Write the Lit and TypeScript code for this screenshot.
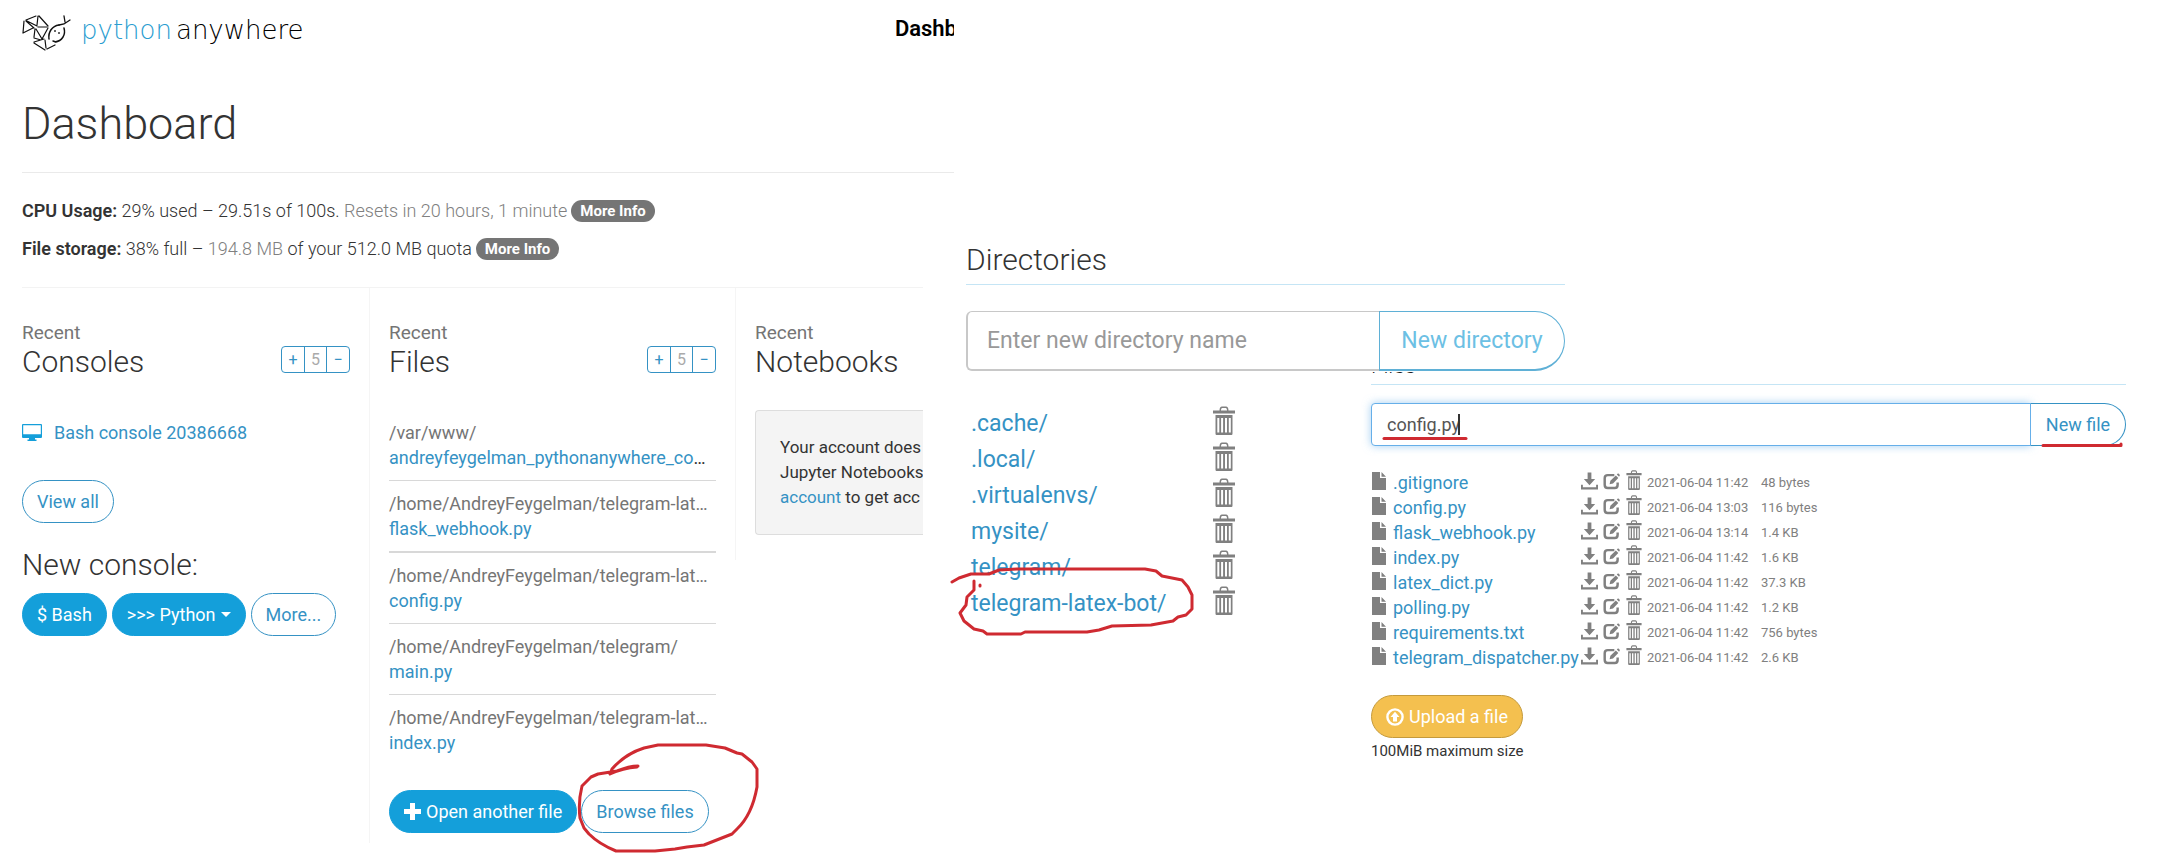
import { LitElement, html, css } from "lit";
import { customElement } from "lit/decorators.js";

const trash = html`<svg viewBox="0 0 22 29" aria-hidden="true"><path fill-rule="evenodd" d="M0 4.500h6.500c0-2.500 1-4 2.500-4h4c1.500 0 2.500 1.500 2.500 4H22v3H0zM8 4.500h6c0-1.500-.5-2.500-1.200-2.500H9.200C8.500 2 8 3 8 4.500zM2.500 9h17v18.500c0 1-.5 1.500-1.500 1.500H4c-1 0-1.500-.5-1.500-1.500zM4.300 12v14.500h2V12zM8.100 12v14.500h2V12zM12 12v14.500h2V12zM15.800 12v14.500h2V12z"/></svg>`;
const fileIcon = html`<svg class="doc" viewBox="0 0 14 18" aria-hidden="true"><path d="M0 0h8v6h6v12H0zM9.500 0L14 4.700H9.500z"/></svg>`;
const download = html`<svg viewBox="0 0 18 18" aria-hidden="true"><path d="M7 0h4v7h4l-6 6.500L3 7h4zM0 13h2v2.500h14V13h2v5H0z"/></svg>`;
const edit = html`<svg viewBox="0 0 18 18" aria-hidden="true"><path fill="none" stroke="currentColor" stroke-width="2.600" d="M12 2.800H5Q1.800 2.800 1.800 6v7Q1.800 16.500 5 16.500h7.500q3 0 3-3.500v-2.500"/><path d="M7 12.500l.8-3.700 5.800-5.600 2.600 2.600-5.600 5.800zM14.600 2.200L16 .8 18 2.600 17 4.500z"/></svg>`;

const snake = html`<svg class="snake" viewBox="0 0 49 36" aria-hidden="true"><g fill="none" stroke="#111" stroke-width="1.200" stroke-linecap="round"><path d="M4 5L14 1M2 6L1 18M4 6L12 13M5 6L15 11M1 18L11 13M16 1L15 10M17 1L26 11M16 12L25 12M13 14L12 22M14 14L20 24M26 13L20 24M12 23L19 25M12 27L22 24M12 28L23 35M23 25L24 33M25 34L33 30"/><path d="M37 10C30 11 26 17 27 24M42 13C44 20 40 26 33 27M31 26l3 1" stroke-width="1.500"/><path d="M37 10l5-1 6-4M42 1l1 6" stroke-width="1.300"/></g><circle cx="33" cy="16" r="1"/><circle cx="37" cy="18" r="1"/></svg>`;

const recentFiles = [
  ["/var/www/", "andreyfeygelman_pythonanywhere_co", false, true],
  ["/home/AndreyFeygelman/telegram-lat", "flask_webhook.py", true, false],
  ["/home/AndreyFeygelman/telegram-lat", "config.py", true, false],
  ["/home/AndreyFeygelman/telegram/", "main.py", false, false],
  ["/home/AndreyFeygelman/telegram-lat", "index.py", true, false],
] as const;

const directories = [".cache/", ".local/", ".virtualenvs/", "mysite/", "telegram/", "telegram-latex-bot/"];

const files = [
  [".gitignore", "2021-06-04 11:42", "48 bytes"],
  ["config.py", "2021-06-04 13:03", "116 bytes"],
  ["flask_webhook.py", "2021-06-04 13:14", "1.4 KB"],
  ["index.py", "2021-06-04 11:42", "1.6 KB"],
  ["latex_dict.py", "2021-06-04 11:42", "37.3 KB"],
  ["polling.py", "2021-06-04 11:42", "1.2 KB"],
  ["requirements.txt", "2021-06-04 11:42", "756 bytes"],
  ["telegram_dispatcher.py", "2021-06-04 11:42", "2.6 KB"],
];

const shared = css`
  :host { display: block; font: 18px/25px Roboto, sans-serif; color: #333; }
  * { box-sizing: border-box; }
  h1, h2, p, ul { margin: 0; padding: 0; }
  h1, h2 { font-weight: 300; }
  ul { list-style: none; }
  a { color: #3592c4; text-decoration: none; }
  button, input { font: inherit; margin: 0; }
  svg { display: block; fill: currentColor; overflow: visible; }
  .btn { height: 43px; padding: 0 14px; border: 1px solid #3592c4; border-radius: 22px; background: #fff; color: #3592c4; white-space: nowrap; display: inline-flex; align-items: center; gap: 5px; }
  .solid { background: #149fda; border-color: #149fda; color: #fff; }
  .ink { position: absolute; fill: none; stroke: #cf2a31; stroke-width: 3; stroke-linejoin: round; stroke-linecap: round; pointer-events: none; }
`;

@customElement("dashboard-panel")
class DashboardPanel extends LitElement {
  static styles = [shared, css`
    :host { overflow: hidden; padding: 0 0 28px 22px; }
    .top { display: flex; justify-content: space-between; align-items: center; height: 56px; padding-top: 10px; }
    .brand { display: flex; align-items: center; gap: 10px; }
    .snake { width: 49px; height: 36px; }
    .name { font: 200 26px/30px "DejaVu Sans", sans-serif; color: #000; white-space: nowrap; display: flex; gap: 4px; margin-top: -6px; }
    .name b { font-weight: 200; color: #2a9dd0; }
    .here { font-size: 22px; font-weight: 600; color: #000; margin: 0 -3px 10px 0; }
    h1 { font-size: 45px; line-height: 50px; padding: 43px 0 23px; border-bottom: 1px solid #eaeaea; }
    .stats { padding: 25px 0 26px; display: grid; gap: 13px; font-weight: 300; }
    .stats p { display: flex; align-items: center; gap: 4px; white-space: pre; }
    .stats b { font-weight: 600; }
    .dim { color: #808080; }
    .pill { border: 0; border-radius: 12px; height: 22px; padding: 0 9px; background: #757575; color: #fff; font-size: 15px; line-height: 22px; font-weight: 700; }
    .cols { display: grid; grid-template-columns: 347fr 366fr 188fr; align-items: start; margin-right: 31px; border-top: 1px solid #f3f3f3; }
    .col { padding: 32px 19px 10px 0; min-width: 0; }
    .col + .col { padding-left: 19px; border-left: 1px solid #f5f5f5; }
    .col:nth-child(3) { padding-right: 0; padding-bottom: 25px; overflow: hidden; }
    .head { display: flex; justify-content: space-between; align-items: flex-end; height: 58px; margin-bottom: 42px; }
    .recent { color: #757575; font-size: 19px; }
    h2 { font-size: 30px; line-height: 33px; }
    .count { display: flex; height: 27px; margin-bottom: 5px; border: 1px solid #3592c4; border-radius: 4px; align-items: stretch; font-size: 16px; color: #aaa; text-align: center; line-height: 25px; }
    .count span { width: 21px; }
    .count button { width: 23px; border: 0; padding: 0; background: none; color: #3592c4; }
    .count button:first-child { border-right: 1px solid #3592c4; }
    .count button:last-child { border-left: 1px solid #3592c4; }
    .console { display: flex; align-items: center; gap: 12px; margin-bottom: 35px; }
    .screen { width: 20px; height: 17px; color: #149fda; }
    .new { padding: 25px 0 12px; }
    .row { display: flex; gap: 5px; }
    .files li { padding-bottom: 10px; white-space: nowrap; }
    .files li + li { padding-top: 10px; border-top: 1px solid #d8d8d8; }
    .files li:nth-child(3) { border-top-width: 2px; }
    .files p { color: #757575; }
    .actions { display: flex; gap: 4px; padding-top: 25px; position: relative; }
    .actions .ink { left: 190px; top: -21px; width: 180px; height: 110px; }
    .plus { width: 17px; height: 17px; }
    .well { padding: 24px; height: 125px; font-size: 17px; background: #f4f4f4; border: 1px solid #ddd; border-right: 0; border-radius: 4px 0 0 4px; white-space: nowrap; margin-top: -10px; }
  `];

  counter(label: string) {
    return html`<div class="count"><button aria-label="More ${label}">+</button><span>5</span><button aria-label="Fewer ${label}">−</button></div>`;
  }

  render() {
    return html`
      <header class="top">
        <div class="brand">${snake}<span class="name"><b>python</b><span>anywhere</span></span></div>
        <span class="here">Dashb</span>
      </header>
      <h1>Dashboard</h1>
      <div class="stats">
        <p><span><b>CPU Usage:</b> 29% used – 29.51s of 100s. <span class="dim">Resets in 20 hours, 1 minute</span></span><button class="pill">More Info</button></p>
        <p><span><b>File storage:</b> 38% full – <span class="dim">194.8 MB</span> of your 512.0 MB quota</span><button class="pill">More Info</button></p>
      </div>
      <div class="cols">
        <section class="col">
          <div class="head"><div><p class="recent">Recent</p><h2>Consoles</h2></div>${this.counter("consoles")}</div>
          <div class="console"><svg class="screen" viewBox="0 0 20 17" aria-hidden="true"><path fill-rule="evenodd" d="M1 0h18q1 0 1 1v12q0 1-1 1h-6v1.500h1.500V17h-9v-1.500H7V14H1q-1 0-1-1V1q0-1 1-1zM1.200 1.200v9h17.600v-9z"/></svg><a href="#">Bash console 20386668</a></div>
          <button class="btn">View all</button>
          <h2 class="new">New console:</h2>
          <div class="row"><button class="btn solid">$ Bash</button><button class="btn solid">&gt;&gt;&gt; Python<svg width="10" height="5" viewBox="0 0 10 5" aria-hidden="true"><path d="M0 0h10L5 5z"/></svg></button><button class="btn">More...</button></div>
        </section>
        <section class="col">
          <div class="head"><div><p class="recent">Recent</p><h2>Files</h2></div>${this.counter("files")}</div>
          <ul class="files">${recentFiles.map(([dir, name, dirCut, nameCut]) => html`<li><p>${dir}${dirCut ? "…" : ""}</p><a href="#">${name}</a>${nameCut ? "…" : ""}</li>`)}</ul>
          <div class="actions">
            <button class="btn solid"><svg class="plus" viewBox="0 0 17 17" aria-hidden="true"><path d="M6 0h5v6h6v5h-6v6H6v-6H0V6h6z"/></svg>Open another file</button>
            <button class="btn">Browse files</button>
            <svg class="ink" viewBox="0 0 180 110" aria-hidden="true"><path d="M58 23Q44 24 31 30L33 25Q46 10 65 4L79 1H127L146 4L158 9L163 10L173 18L178 25V43Q173 71 158 85L153 90L125 101L108 103L96 105L76 107H37Q20 100 10 90L5 84L1 74Q-1 58 3 42L12 33L19 30L38 27Q50 22 59 22"/></svg>
          </div>
        </section>
        <section class="col">
          <div class="head"><div><p class="recent">Recent</p><h2>Notebooks</h2></div></div>
          <div class="well">Your account does<br>Jupyter Notebooks<br><a href="#">account</a> to get acc</div>
        </section>
      </div>`;
  }
}

@customElement("directories-panel")
class DirectoriesPanel extends LitElement {
  static styles = [shared, css`
    h2 { font-size: 30px; line-height: 36px; padding: 0 0 6px; border-bottom: 1px solid #c5e5f5; margin-bottom: 26px; }
    .add { display: flex; height: 60px; font-size: 23px; background: #fff; }
    input { flex: 1; min-width: 0; padding: 0 19px; border: 2px solid #c8c8c8; border-top-width: 1px; border-right: 0; border-radius: 6px 0 0 6px; background: #fff; }
    input::placeholder { color: #999; opacity: 1; }
    .add button { width: 186px; padding: 0; border: 1px solid #5fb0d6; border-bottom-width: 2px; border-radius: 0 30px 30px 0; background: #fff; color: #6cc0e4; }
    ul { position: relative; padding: 35px 0 0 5px; font-size: 23px; line-height: 36px; }
    li { display: grid; grid-template-columns: 242px 22px; align-items: start; }
    .bin { border: 0; padding: 0; background: none; color: #808080; height: 36px; display: flex; align-items: flex-start; }
    .bin svg { width: 22px; height: 29px; }
    .ink { left: -15px; top: 196px; width: 242px; height: 66px; }
  `];

  render() {
    return html`
      <h2>Directories</h2>
      <form class="add"><input aria-label="New directory name" placeholder="Enter new directory name"><button type="button">New directory</button></form>
      <ul>${directories.map((d) => html`<li><a href="#">${d}</a><button class="bin" aria-label="Delete ${d}">${trash}</button></li>`)}
        <svg class="ink" viewBox="0 0 242 66" aria-hidden="true"><path d="M1 15L8 11L20 7H38L48 3L66 2H194L205 4L211 9L231 13L237 20L241 28V42L235 48L227 50L222 54L200 58L161 59L148 63L136 65H74L70 67H36L32 64L23 62L13 54L9 46L15 38L16 30L23 23V14M29 18V19"/></svg>
      </ul>`;
  }
}

@customElement("files-panel")
class FilesPanel extends LitElement {
  static styles = [shared, css`
    .cut { display: flex; align-items: flex-end; height: 3px; overflow: hidden; }
    h2 { font-size: 22px; line-height: 18px; color: #222; }
    .rule { border-top: 1px solid #c5e5f5; margin: 9px 0 18px; }
    .add { display: flex; height: 43px; position: relative; margin-bottom: 24px; }
    input { flex: 1; min-width: 0; padding: 0 15px; border: 1px solid #66afe9; border-radius: 4px 0 0 4px; color: #555; box-shadow: 0 0 9px rgba(102, 175, 233, 0.6); outline: 0; }
    .add button { width: 96px; padding: 0; margin-left: -1px; border: 1px solid #3592c4; border-left-color: #66afe9; border-radius: 0 22px 22px 0; background: #fff; color: #3592c4; }
    .caret { position: absolute; left: 87px; top: 11px; width: 2px; height: 21px; background: #333; }
    .ink.name { left: 12px; top: 34px; width: 84px; height: 3px; }
    .ink.go { right: 4px; top: 40px; width: 80px; height: 4px; }
    table { border-collapse: collapse; color: #808080; }
    td { padding: 0; height: 25px; vertical-align: top; white-space: nowrap; }
    td:nth-child(1) { width: 22px; }
    td:nth-child(2) { width: 188px; }
    .tools { display: grid; grid-template-columns: 17px 18px 16px; gap: 5px; margin-right: 5px; padding-top: 2px; }
    .tools button { border: 0; padding: 0; background: none; color: inherit; height: 18px; display: flex; }
    .tools svg { height: 18px; width: 17px; }
    .tools button:last-child svg { height: 20px; width: 16px; margin-top: -2px; }
    .doc { width: 14px; height: 20px; padding-top: 2px; margin-left: 1px; }
    .small { font-size: 13px; }
    .date { width: 114px; }
    .upload { margin-top: 25px; background: #f4c04f; border-color: #c49a3c; color: #fff; }
    .upload svg { width: 18px; height: 18px; }
    .limit { font-size: 15px; padding-top: 1px; }
  `];

  render() {
    return html`
      <div class="cut"><h2>Files</h2></div>
      <div class="rule"></div>
      <form class="add">
        <input aria-label="New file name" .value=${"config.py"}><button type="button">New file</button>
        <span class="caret"></span>
        <svg class="ink name" viewBox="0 0 84 3" aria-hidden="true"><path d="M1 1.500H83"/></svg>
        <svg class="ink go" viewBox="0 0 80 4" aria-hidden="true"><path d="M1 2.500H79V1"/></svg>
      </form>
      <table>${files.map(([name, date, size]) => html`<tr>
        <td>${fileIcon}</td><td><a href="#">${name}</a></td>
        <td><div class="tools"><button aria-label="Download ${name}">${download}</button><button aria-label="Edit ${name}">${edit}</button><button aria-label="Delete ${name}">${trash}</button></div></td>
        <td class="small date">${date}</td><td class="small">${size}</td></tr>`)}</table>
      <button class="btn upload"><svg viewBox="0 0 18 18" aria-hidden="true"><circle cx="9" cy="9" r="7.600" fill="none" stroke="currentColor" stroke-width="2.400"/><path d="M9 3.800L13.500 9H11v4.500H7V9H4.500z"/></svg>Upload a file</button>
      <p class="limit">100MiB maximum size</p>`;
  }
}

@customElement("app-root")
class AppRoot extends LitElement {
  static styles = css`
    :host { display: block; background: #fff; }
    .page { display: grid; grid-template-columns: 954fr 12fr 405fr 194fr 561fr 38fr; align-items: start; }
    dashboard-panel { grid-area: 1 / 1 / 2 / 2; }
    directories-panel { grid-area: 1 / 3 / 2 / 5; margin-top: 242px; z-index: 1; }
    files-panel { grid-area: 1 / 4 / 2 / 6; margin-top: 372px; }
  `;

  render() {
    return html`<main class="page"><dashboard-panel></dashboard-panel><directories-panel></directories-panel><files-panel></files-panel></main>`;
  }
}
